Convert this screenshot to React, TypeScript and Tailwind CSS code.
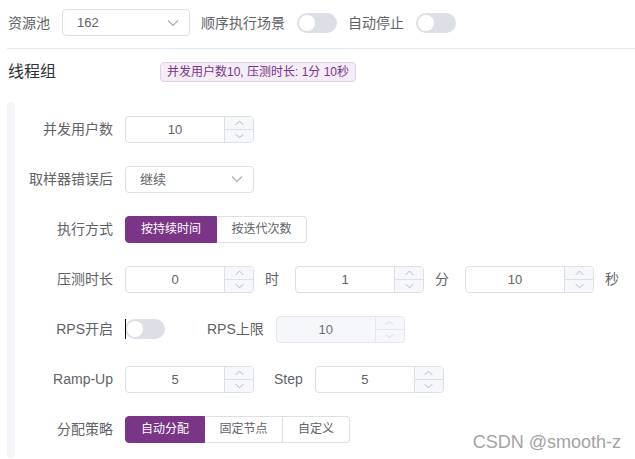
import React from 'react';

const FONT = "font-['Liberation_Sans','Noto_Sans_CJK_SC',sans-serif]";

function ChevronDown({ className = '' }: { className?: string }) {
    return (
        <svg viewBox="0 0 12 8" className={className} fill="none" stroke="currentColor" strokeWidth="1.1">
            <polyline points="1,1.5 6,6.5 11,1.5" />
        </svg>
    );
}

function ChevronUp({ className = '' }: { className?: string }) {
    return (
        <svg viewBox="0 0 12 8" className={className} fill="none" stroke="currentColor" strokeWidth="1.1">
            <polyline points="1,6.5 6,1.5 11,6.5" />
        </svg>
    );
}

function Toggle() {
    return (
        <div className="flex h-[20px] w-[40px] items-center rounded-full bg-[#dcdfe6] p-[2px]">
            <div className="h-4 w-4 rounded-full bg-white" />
        </div>
    );
}

function Select({ value, width }: { value: string; width: string }) {
    return (
        <div className={`flex h-[27px] ${width} items-center justify-between rounded-[4px] border border-[#dcdfe6] bg-white pl-[14px] pr-[10px]`}>
            <span className="text-[13px] text-[#606266]">{value}</span>
            <ChevronDown className="h-[8px] w-[12px] text-[#a8abb2]" />
        </div>
    );
}

function NumberInput({ value, disabled = false }: { value: string; disabled?: boolean }) {
    return (
        <div
            className={`flex h-[27px] w-[129px] overflow-hidden rounded-[4px] border ${
                disabled ? 'border-[#e4e7ed] bg-[#f5f7fa]' : 'border-[#dcdfe6] bg-white'
            }`}
        >
            <div className={`flex flex-1 items-center justify-center text-[13px] ${disabled ? 'text-[#6b6e74]' : 'text-[#606266]'}`}>
                {value}
            </div>
            <div className={`flex w-[29px] flex-col border-l ${disabled ? 'border-[#e4e7ed]' : 'border-[#dcdfe6]'} bg-[#f5f7fa]`}>
                <div className={`flex flex-1 items-center justify-center border-b ${disabled ? 'border-[#e4e7ed]' : 'border-[#dcdfe6]'}`}>
                    <ChevronUp className={`h-[6px] w-[9px] ${disabled ? 'text-[#d3d5da]' : 'text-[#a8abb2]'}`} />
                </div>
                <div className="flex flex-1 items-center justify-center">
                    <ChevronDown className={`h-[6px] w-[9px] ${disabled ? 'text-[#d3d5da]' : 'text-[#a8abb2]'}`} />
                </div>
            </div>
        </div>
    );
}

function Segmented({ items, widths }: { items: string[]; widths: string[] }) {
    return (
        <div className="flex h-[27px] text-[12px]">
            {items.map((item, i) => (
                <div
                    key={item}
                    className={`flex items-center justify-center ${widths[i]} ${
                        i === 0
                            ? 'rounded-l-[4px] border border-[#7a3587] bg-[#7a3587] text-white'
                            : 'border border-l-0 border-[#dcdfe6] bg-white text-[#606266]'
                    } ${i === items.length - 1 ? 'rounded-r-[4px]' : ''}`}
                >
                    {item}
                </div>
            ))}
        </div>
    );
}

function Row({ label, children }: { label: string; children: React.ReactNode }) {
    return (
        <div className="flex h-[50px] items-center">
            <div className="w-[98px] text-right text-[14px] text-[#606266]">{label}</div>
            <div className="ml-3 flex items-center">{children}</div>
        </div>
    );
}

export default function App() {
    return (
        <div className={`relative h-[459px] w-[635px] overflow-hidden bg-white leading-none ${FONT}`}>
            {/* top settings */}
            <div className="flex h-[27px] items-center pl-2 mt-[9px] text-[14px] text-[#606266]">
                <span className="w-[42px]">资源池</span>
                <div className="ml-3">
                    <Select value="162" width="w-[128px]" />
                </div>
                <span className="ml-[11px]">顺序执行场景</span>
                <div className="ml-3">
                    <Toggle />
                </div>
                <span className="ml-[11px]">自动停止</span>
                <div className="ml-3">
                    <Toggle />
                </div>
            </div>
            <div className="ml-[7px] mt-[12px] h-px bg-[#e4e7ed]" />

            {/* thread group header */}
            <div className="flex h-[46px] items-center pl-2">
                <span className="w-[152px] text-[16px] text-[#303133]">线程组</span>
                <span className="flex h-[20px] items-center rounded-[4px] border border-[#e2cfe8] bg-[#f4ecf7] px-[6px] text-[12px] text-[#7a3587]">
                    并发用户数10, 压测时长: 1分 10秒
                </span>
            </div>

            {/* form block */}
            <div className="mt-[7px] flex">
                <div className="ml-[7px] w-[8px] rounded-[4px] bg-[#f4f5f9]" />
                <div className="flex flex-col pt-[2px] pb-[4px]">
                    <Row label="并发用户数">
                        <NumberInput value="10" />
                    </Row>
                    <Row label="取样器错误后">
                        <Select value="继续" width="w-[129px]" />
                    </Row>
                    <Row label="执行方式">
                        <Segmented items={['按持续时间', '按迭代次数']} widths={['w-[92px]', 'w-[90px]']} />
                    </Row>
                    <Row label="压测时长">
                        <NumberInput value="0" />
                        <span className="ml-[11px] w-[30px] text-[14px] text-[#606266]">时</span>
                        <NumberInput value="1" />
                        <span className="ml-[11px] w-[30px] text-[14px] text-[#606266]">分</span>
                        <NumberInput value="10" />
                        <span className="ml-[11px] text-[14px] text-[#606266]">秒</span>
                    </Row>
                    <Row label="RPS开启">
                        <div className="relative z-10 h-[20px] w-px bg-black" />
                        <div className="-ml-px">
                            <Toggle />
                        </div>
                        <span className="ml-[42px] text-[14px] text-[#606266]">RPS上限</span>
                        <div className="ml-3">
                            <NumberInput value="10" disabled />
                        </div>
                    </Row>
                    <Row label="Ramp-Up">
                        <NumberInput value="5" />
                        <span className="ml-[20px] text-[14px] text-[#606266]">Step</span>
                        <div className="ml-3">
                            <NumberInput value="5" />
                        </div>
                    </Row>
                    <Row label="分配策略">
                        <Segmented items={['自动分配', '固定节点', '自定义']} widths={['w-[80px]', 'w-[78px]', 'w-[67px]']} />
                    </Row>
                </div>
            </div>

            {/* watermark */}
            <div className="absolute bottom-[8px] right-[14px] text-[18px] text-[#a3a3a3]">CSDN @smooth-z</div>
        </div>
    );
}
